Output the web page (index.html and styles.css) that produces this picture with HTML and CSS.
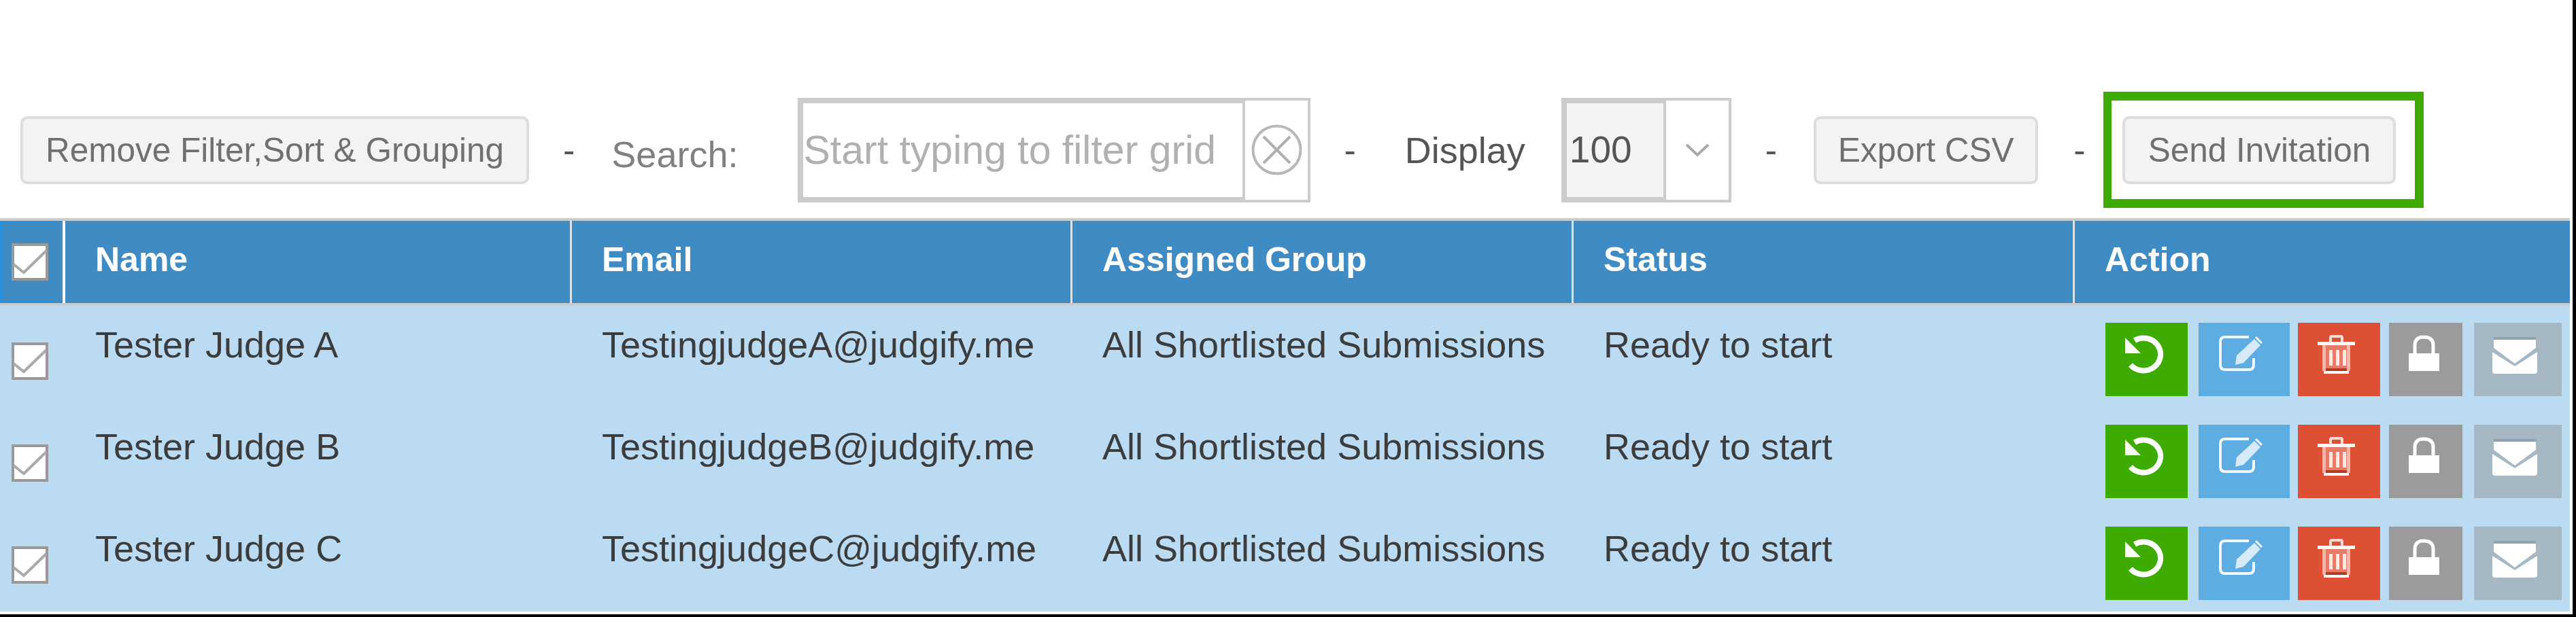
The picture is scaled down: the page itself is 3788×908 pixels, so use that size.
FILE: index.html
```html
<!DOCTYPE html>
<html lang="en">
<head>
  <meta charset="UTF-8">
  <title>Judges</title>
  <meta name="viewport" content="width=device-width,initial-scale=1">
  <link rel="stylesheet" href="styles.css">
</head>
<body>
  <!-- icons used by every row -->
  <svg class="defs" width="0" height="0">
    <symbol id="i-check" viewBox="0 0 54 55">
      <path d="M3 31 L18 43 L51 11" fill="none" stroke="#aaa" stroke-width="4"/>
    </symbol>
    <symbol id="i-undo" viewBox="0 0 57 57">
      <path d="M14 8 A25 24 0 1 1 8 44" fill="none" stroke="#fff" stroke-width="8"/>
      <path d="M0 4 L0 27 L23 27 Z" fill="#fff"/>
    </symbol>
    <symbol id="i-edit" viewBox="0 0 65 53">
      <path d="M44 3 H9 Q2 3 2 10 V44 Q2 51 9 51 H44 Q51 51 51 44 V34" fill="none" stroke="#fff" stroke-width="4" opacity=".9"/>
      <path d="M24 44 L26 30 L52 6 L61 15 L36 41 Z" fill="#fff" opacity=".75"/>
      <path d="M55 2 L64 11 L62 13 L53 4 Z" fill="#fff"/>
    </symbol>
    <symbol id="i-trash" viewBox="0 0 55 57">
      <path d="M19 10 V4 Q19 2 21 2 H34 Q36 2 36 4 V10" fill="none" stroke="#fff" stroke-width="4" opacity=".8"/>
      <path d="M0 10 H55 V15 H0 Z" fill="#fff"/>
      <path d="M7 15 H48 V50 Q48 53 45 53 H10 Q7 53 7 50 Z" fill="#fff" opacity=".25"/>
      <path d="M7 15 H12 V53 H7 Z M43 15 H48 V53 H43 Z" fill="#fff" opacity=".45"/>
      <path d="M17 22 H22 V45 H17 Z M27 22 H32 V45 H27 Z M37 22 H42 V45 H37 Z" fill="#fff" opacity=".85"/>
      <path d="M12 49 H43 V53 H12 Z" fill="#b53a22"/>
      <path d="M9 53 H46 V57 H9 Z" fill="#fff"/>
    </symbol>
    <symbol id="i-lock" viewBox="0 0 45 53">
      <path d="M9 27 V15 Q9 3 22 3 Q36 3 36 15 V27" fill="none" stroke="#fff" stroke-width="5"/>
      <path d="M0 27 H45 V53 H0 Z" fill="#fff"/>
    </symbol>
    <symbol id="i-mail" viewBox="0 0 70 54">
      <path d="M4 0 H66 V4 H4 Z" fill="#8fa2af"/>
      <path d="M4 4 H66 V16 L35 39 L4 16 Z" fill="#fff"/>
      <path d="M2 22 L35 43 L68 22 V50 Q68 54 64 54 H6 Q2 54 2 50 Z" fill="#fff"/>
    </symbol>
  </svg>

  <div class="toolbar">
    <button class="btn btn-remove" type="button">Remove Filter,Sort &amp; Grouping</button>
    <span class="dash dash-a">-</span>
    <span class="search-label">Search:</span>
    <div class="search">
      <input class="search-input" type="text" placeholder="Start typing to filter grid">
      <span class="search-clear">
        <svg width="75" height="75" viewBox="0 0 75 75">
          <circle cx="37.5" cy="37.5" r="35" fill="none" stroke="#b8b8b8" stroke-width="4"/>
          <path d="M18 18 L57 57 M57 18 L18 57" stroke="#b0b0b0" stroke-width="4"/>
        </svg>
      </span>
    </div>
    <span class="dash dash-b">-</span>
    <span class="display-label">Display</span>
    <div class="pagesize">
      <span class="pagesize-value">100</span>
      <span class="pagesize-arrow">
        <svg width="34" height="21" viewBox="0 0 34 21"><path d="M1 3 L17 18 L33 3" fill="none" stroke="#aaa" stroke-width="4"/></svg>
      </span>
    </div>
    <span class="dash dash-c">-</span>
    <button class="btn btn-export" type="button">Export CSV</button>
    <span class="dash dash-d">-</span>
    <div class="highlight">
      <button class="btn btn-send" type="button">Send Invitation</button>
    </div>
  </div>

  <div class="grid">
    <div class="row head">
      <div class="cell cell-check cell-check-head"><span class="check"><svg><use href="#i-check"/></svg></span></div>
      <div class="cell">Name</div>
      <div class="cell">Email</div>
      <div class="cell">Assigned Group</div>
      <div class="cell">Status</div>
      <div class="cell last">Action</div>
    </div>

    <div class="rows">
      <div class="row">
        <div class="cell-check"><span class="check"><svg><use href="#i-check"/></svg></span></div>
        <div class="cell">Tester Judge A</div>
        <div class="cell">TestingjudgeA@judgify.me</div>
        <div class="cell">All Shortlisted Submissions</div>
        <div class="cell">Ready to start</div>
        <div class="actions">
          <span class="act act-undo"><svg class="ic-undo"><use href="#i-undo"/></svg></span>
          <span class="act act-edit"><svg class="ic-edit"><use href="#i-edit"/></svg></span>
          <span class="act act-trash"><svg class="ic-trash"><use href="#i-trash"/></svg></span>
          <span class="act act-lock"><svg class="ic-lock"><use href="#i-lock"/></svg></span>
          <span class="act act-mail"><svg class="ic-mail"><use href="#i-mail"/></svg></span>
        </div>
      </div>

      <div class="row">
        <div class="cell-check"><span class="check"><svg><use href="#i-check"/></svg></span></div>
        <div class="cell">Tester Judge B</div>
        <div class="cell">TestingjudgeB@judgify.me</div>
        <div class="cell">All Shortlisted Submissions</div>
        <div class="cell">Ready to start</div>
        <div class="actions">
          <span class="act act-undo"><svg class="ic-undo"><use href="#i-undo"/></svg></span>
          <span class="act act-edit"><svg class="ic-edit"><use href="#i-edit"/></svg></span>
          <span class="act act-trash"><svg class="ic-trash"><use href="#i-trash"/></svg></span>
          <span class="act act-lock"><svg class="ic-lock"><use href="#i-lock"/></svg></span>
          <span class="act act-mail"><svg class="ic-mail"><use href="#i-mail"/></svg></span>
        </div>
      </div>

      <div class="row">
        <div class="cell-check"><span class="check"><svg><use href="#i-check"/></svg></span></div>
        <div class="cell">Tester Judge C</div>
        <div class="cell">TestingjudgeC@judgify.me</div>
        <div class="cell">All Shortlisted Submissions</div>
        <div class="cell">Ready to start</div>
        <div class="actions">
          <span class="act act-undo"><svg class="ic-undo"><use href="#i-undo"/></svg></span>
          <span class="act act-edit"><svg class="ic-edit"><use href="#i-edit"/></svg></span>
          <span class="act act-trash"><svg class="ic-trash"><use href="#i-trash"/></svg></span>
          <span class="act act-lock"><svg class="ic-lock"><use href="#i-lock"/></svg></span>
          <span class="act act-mail"><svg class="ic-mail"><use href="#i-mail"/></svg></span>
        </div>
      </div>
    </div>
  </div>
</body>
</html>
```

FILE: styles.css
```css
html, body { margin:0; padding:0; background:#fff; }
body { box-sizing:border-box; height:908px; overflow:hidden; border-right:5px solid #000; border-bottom:4px solid #000; font-family:"Liberation Sans", Arial, sans-serif; color:#333; }
.defs { position:absolute; }

/* toolbar */
.toolbar { display:flex; align-items:center; height:171px; padding:135px 0 0 30px; margin-bottom:15px; }
.btn { box-sizing:border-box; height:100px; padding:0; font:49.5px "Liberation Sans", Arial, sans-serif; color:#707070; background:#f3f3f3; border:4px solid #ddd; border-radius:10px; }
.btn-remove { width:748px; }
.btn-export { width:330px; }
.btn-send { width:402px; }
.dash { font-size:52px; color:#555; line-height:60px; }
.dash-a { margin:0 54px 0 50px; }
.dash-b { margin:0 72px 0 49px; }
.dash-c { margin:0 54px 0 50px; }
.dash-d { margin:0 27px 0 52px; }
.search-label { font-size:54px; color:#808080; margin:12px 88px 0 0; }
.display-label { font-size:54px; color:#555; margin:0 53px 0 0; }

.search { display:flex; box-sizing:border-box; width:754px; height:154px; }
.search-input { box-sizing:border-box; width:658px; height:154px; padding:0; border:8px solid #ccc; border-right-width:4px; outline:0; font:59px "Liberation Sans", Arial, sans-serif; color:#aaa; }
.search-input::placeholder { color:#b0b0b0; opacity:1; }
.search-clear { box-sizing:border-box; flex:1; display:flex; align-items:center; justify-content:center; border:solid #ccc; border-width:4px 4px 4px 0; }

.pagesize { display:flex; box-sizing:border-box; width:250px; height:154px; }
.pagesize-value { box-sizing:border-box; width:154px; border:8px solid #ccc; border-right-width:4px; background:#f3f3f3; font-size:55px; color:#555; line-height:136px; padding-left:4px; }
.pagesize-arrow { box-sizing:border-box; flex:1; display:flex; justify-content:center; padding-top:62px; border:solid #ccc; border-width:4px 4px 4px 0; }

.highlight { box-sizing:border-box; display:flex; align-items:center; width:471px; height:171px; padding-left:16px; border:13px solid #3dab00; border-left-width:12px; }

/* grid */
.grid { width:3779px; }
.row { display:grid; grid-template-columns:96px 745px 736px 737px 737px 728px; }
.head { box-sizing:border-box; height:129px; border-top:4px solid #ccc; border-bottom:4px solid #ccc; background:#3f8cc5; color:#fff; font-size:50px; font-weight:bold; }
.head .cell { display:flex; align-items:center; padding:0 0 8px 44px; border-right:3px solid #d9e4ec; }
.head .cell.last { border-right:0; }
.head .cell-check-head { padding:0 0 0 14px; border:3px solid #2790df; border-right:0; position:relative; }
.head .cell-check-head::after { content:""; position:absolute; top:-3px; right:0; bottom:-3px; width:4px; background:#fff; }
.cell { box-sizing:border-box; padding-left:44px; }
.rows { background:#bbdbf3; }
.rows .row { height:150px; box-sizing:border-box; }
.rows .cell { padding-top:27px; font-size:54px; line-height:60px; color:#3c3c3c; white-space:nowrap; }
.rows .cell-check { padding:54px 0 0 17px; }
.check { display:block; box-sizing:border-box; width:54px; height:55px; border:4px solid #999; background:#fff; }
.check svg { display:block; width:54px; height:55px; margin:-4px; }

.actions { display:flex; padding:25px 0 0 45px; }
.act { display:block; height:108px; padding-top:18px; box-sizing:border-box; }
.act svg { display:block; }
.act-undo { width:121px; background:#3dab00; margin-right:16px; padding-left:29px; }
.act-edit { width:134px; background:#5dade2; margin-right:12px; padding-left:30px; }
.act-trash { width:121px; background:#de5034; margin-right:13px; padding-left:29px; }
.act-lock { width:108px; background:#9b9b9b; margin-right:17px; padding-left:29px; }
.act-mail { width:129px; background:#a5b8c4; padding:21px 0 0 25px; }
.ic-undo { width:57px; height:57px; }
.ic-edit { width:65px; height:53px; }
.ic-trash { width:55px; height:57px; }
.ic-lock { width:45px; height:53px; }
.ic-mail { width:70px; height:54px; }
```
